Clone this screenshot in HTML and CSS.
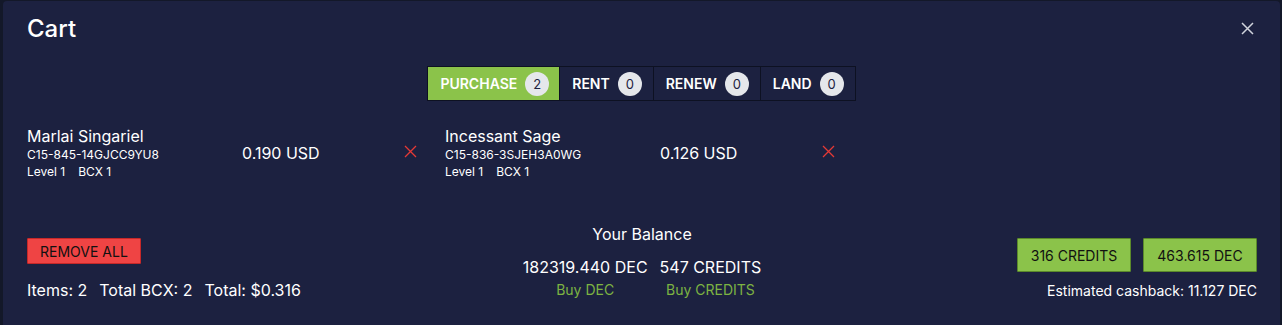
FILE: index.html
```html
<!DOCTYPE html>
<html lang="en">
<head>
    <meta charset="utf-8">
    <title>Cart</title>
    <link rel="stylesheet" href="styles.css">
</head>
<body>
    <div class="modal">
        <div class="header">
            <h2>Cart</h2>
            <svg class="close" width="13" height="13" viewBox="0 0 13 13"><path d="M1 1L12 12M12 1L1 12" stroke="#d0d3dc" stroke-width="1.5"/></svg>
        </div>

        <div class="tabs">
            <div class="tab active">PURCHASE <span class="badge">2</span></div>
            <div class="tab">RENT <span class="badge">0</span></div>
            <div class="tab">RENEW <span class="badge">0</span></div>
            <div class="tab">LAND <span class="badge">0</span></div>
        </div>

        <div class="items">
            <div class="item">
                <div class="info">
                    <div class="name">Marlai Singariel</div>
                    <div class="uid">C15-845-14GJCC9YU8</div>
                    <div class="meta"><span>Level 1</span><span>BCX 1</span></div>
                </div>
                <div class="price">0.190 USD</div>
                <svg class="remove" width="13" height="13" viewBox="0 0 13 13"><path d="M1 1L12 12M12 1L1 12" stroke="#e53935" stroke-width="1.3"/></svg>
            </div>
            <div class="item">
                <div class="info">
                    <div class="name">Incessant Sage</div>
                    <div class="uid">C15-836-3SJEH3A0WG</div>
                    <div class="meta"><span>Level 1</span><span>BCX 1</span></div>
                </div>
                <div class="price">0.126 USD</div>
                <svg class="remove" width="13" height="13" viewBox="0 0 13 13"><path d="M1 1L12 12M12 1L1 12" stroke="#e53935" stroke-width="1.3"/></svg>
            </div>
        </div>

        <div class="footer">
            <div class="summary">
                <button class="remove-all">REMOVE ALL</button>
                <div class="totals"><span>Items: 2</span><span>Total BCX: 2</span><span>Total: $0.316</span></div>
            </div>
            <div class="balance">
                <div class="balance-title">Your Balance</div>
                <div class="balance-row">
                    <div class="col">
                        <div class="amount">182319.440 DEC</div>
                        <a class="buy">Buy DEC</a>
                    </div>
                    <div class="col">
                        <div class="amount">547 CREDITS</div>
                        <a class="buy">Buy CREDITS</a>
                    </div>
                </div>
            </div>
            <div class="pay">
                <div class="pay-buttons">
                    <button class="pay-btn">316 CREDITS</button>
                    <button class="pay-btn">463.615 DEC</button>
                </div>
                <div class="cashback">Estimated cashback: 11.127 DEC</div>
            </div>
        </div>
    </div>
</body>
</html>
```

FILE: styles.css
```css
body {
    margin: 0;
    background: #131829;
    font-family: Inter, "Noto Sans", sans-serif;
    color: #ffffff;
}
.modal {
    margin: 1px 2px 0 3px;
    height: 324px;
    box-sizing: border-box;
    background: #1c2140;
    padding: 12px 23px 0 24px;
    border-radius: 4px 4px 0 0;
}
.header {
    display: flex;
    justify-content: space-between;
    align-items: center;
    height: 30px;
}
.header h2 {
    margin: 0;
    font-size: 24px;
    font-weight: 500;
}
.close {
    margin-right: 3px;
}
.tabs {
    display: flex;
    justify-content: center;
    margin-top: 23px;
}
.tab {
    display: flex;
    align-items: center;
    gap: 8px;
    height: 35px;
    padding: 0 11px 0 12px;
    border: 1px solid #0d1122;
    margin-left: -1px;
    font-size: 14px;
    font-weight: 600;
    box-sizing: border-box;
}
.tab.active {
    background: #8bc34a;
    padding-left: 12px;
    padding-right: 10px;
}
.badge {
    display: inline-flex;
    align-items: center;
    justify-content: center;
    width: 24px;
    height: 24px;
    border-radius: 50%;
    background: #e5e7eb;
    color: #1c2140;
    font-size: 13px;
    font-weight: 400;
}
.items {
    display: flex;
    margin-top: 25px;
}
.item {
    width: 418px;
    display: flex;
    align-items: center;
}
.info {
    width: 215px;
}
.name {
    font-size: 16px;
    line-height: 20px;
}
.uid, .meta {
    font-size: 12px;
    line-height: 17px;
}
.meta span + span {
    margin-left: 13px;
}
.price {
    width: 162px;
    font-size: 16px;
}
.remove {
    margin-top: -4px;
}
.footer {
    display: flex;
    justify-content: space-between;
    margin-top: 44px;
}
.summary {
    padding-top: 14px;
    width: 360px;
}
.remove-all {
    background: #ef4444;
    border: 1px solid #c62828;
    color: #111111;
    font-family: inherit;
    font-size: 14px;
    height: 26px;
    padding: 0 12px;
    border-radius: 1px;
}
.totals {
    margin-top: 16px;
    font-size: 16px;
}
.totals span + span {
    margin-left: 12px;
}
.balance {
    text-align: center;
}
.balance-title {
    font-size: 16px;
    line-height: 20px;
}
.balance-row {
    display: flex;
    gap: 12px;
    margin-top: 13px;
}
.amount {
    font-size: 16px;
    line-height: 20px;
}
.buy {
    display: block;
    color: #7cb342;
    font-size: 14px;
    margin-top: 4px;
}
.pay {
    width: 360px;
    display: flex;
    flex-direction: column;
    align-items: flex-end;
    padding-top: 14px;
}
.pay-buttons {
    display: flex;
    gap: 12px;
}
.pay-btn {
    background: #8bc34a;
    border: 1px solid #5b8a2a;
    color: #111111;
    font-family: inherit;
    font-size: 14px;
    height: 34px;
    width: 114px;
    border-radius: 1px;
}
.cashback {
    margin-top: 10px;
    font-size: 14px;
}
```
